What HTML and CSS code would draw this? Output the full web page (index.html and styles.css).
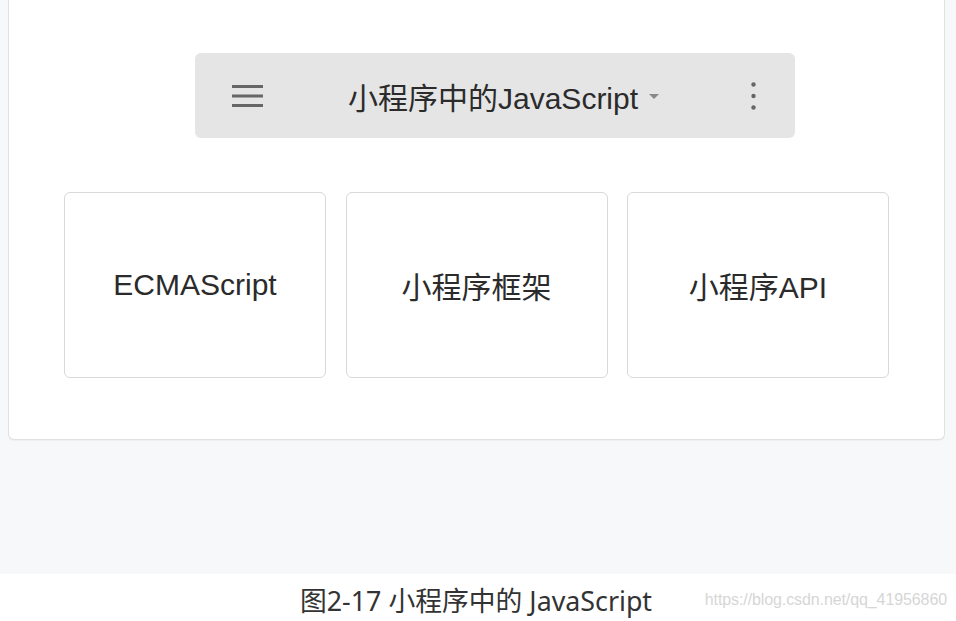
FILE: index.html
```html
<!DOCTYPE html>
<html lang="zh-CN">
<head>
<meta charset="utf-8">
<title>小程序中的JavaScript</title>
<link rel="stylesheet" href="styles.css">
</head>
<body>
<div class="stage">
  <div class="panel">
    <div class="toolbar">
      <svg class="menu" width="31" height="22" viewBox="0 0 31 22">
        <rect x="0" y="0" width="31" height="3" fill="#666"/>
        <rect x="0" y="9.5" width="31" height="3" fill="#666"/>
        <rect x="0" y="19" width="31" height="3" fill="#666"/>
      </svg>
      <div class="title">小程序中的JavaScript<span class="caret"></span></div>
      <svg class="more" width="5" height="28" viewBox="0 0 5 28">
        <circle cx="2.5" cy="2.5" r="2.2" fill="#666"/>
        <circle cx="2.5" cy="14" r="2.2" fill="#666"/>
        <circle cx="2.5" cy="25.5" r="2.2" fill="#666"/>
      </svg>
    </div>
    <div class="cards">
      <div class="card">ECMAScript</div>
      <div class="card">小程序框架</div>
      <div class="card">小程序API</div>
    </div>
  </div>
</div>
<div class="caption-row">
  <span class="caption">图2-17 小程序中的 JavaScript</span>
  <span class="mark">https://blog.csdn.net/qq_41956860</span>
</div>
</body>
</html>
```
FILE: styles.css
```css
html, body {
  margin: 0;
  padding: 0;
  background: #ffffff;
}

body {
  width: 956px;
  height: 621px;
  overflow: hidden;
  font-family: "Liberation Sans", "Noto Sans CJK SC", sans-serif;
}

.stage {
  height: 574px;
  background: #f7f8fa;
  padding: 0 11px 0 8px;
  box-sizing: border-box;
}

.panel {
  height: 440px;
  box-sizing: border-box;
  background: #ffffff;
  border: 1px solid #e1e1e1;
  border-top: none;
  border-radius: 0 0 6px 6px;
  box-shadow: 0 1px 1px rgba(0, 0, 0, 0.04);
  display: flex;
  flex-direction: column;
}

.toolbar {
  margin-top: 53px;
  margin-left: 186px;
  width: 600px;
  height: 85px;
  background: #e5e5e5;
  border-radius: 6px;
  display: flex;
  align-items: center;
}

.menu {
  margin-left: 37px;
  flex: none;
}

.title {
  margin-left: 85px;
  font-size: 30px;
  color: #2b2b2b;
  display: flex;
  align-items: center;
}

.caret {
  margin-left: 11px;
  width: 0;
  height: 0;
  border-left: 5px solid transparent;
  border-right: 5px solid transparent;
  border-top: 5px solid #888;
  margin-top: 2px;
}

.more {
  margin-left: auto;
  margin-right: 39px;
  flex: none;
}

.cards {
  margin-top: 54px;
  margin-left: 55px;
  display: flex;
  gap: 19.5px;
}

.card {
  width: 262px;
  height: 186px;
  box-sizing: border-box;
  border: 1.5px solid #d9d9d9;
  border-radius: 6px;
  display: flex;
  align-items: center;
  justify-content: center;
  font-size: 30px;
  color: #2b2b2b;
}

.caption-row {
  height: 47px;
  display: flex;
  align-items: center;
  padding-left: 300px;
}

.caption {
  font-family: "Noto Sans", "Noto Sans CJK SC", sans-serif;
  font-size: 26.8px;
  color: #333333;
  white-space: nowrap;
  margin-top: 4px;
}

.mark {
  margin-left: auto;
  margin-right: 9px;
  margin-top: 4px;
  font-family: "Liberation Sans", sans-serif;
  font-size: 16px;
  color: #d6d6d6;
  white-space: nowrap;
  letter-spacing: -0.1px;
}
```
